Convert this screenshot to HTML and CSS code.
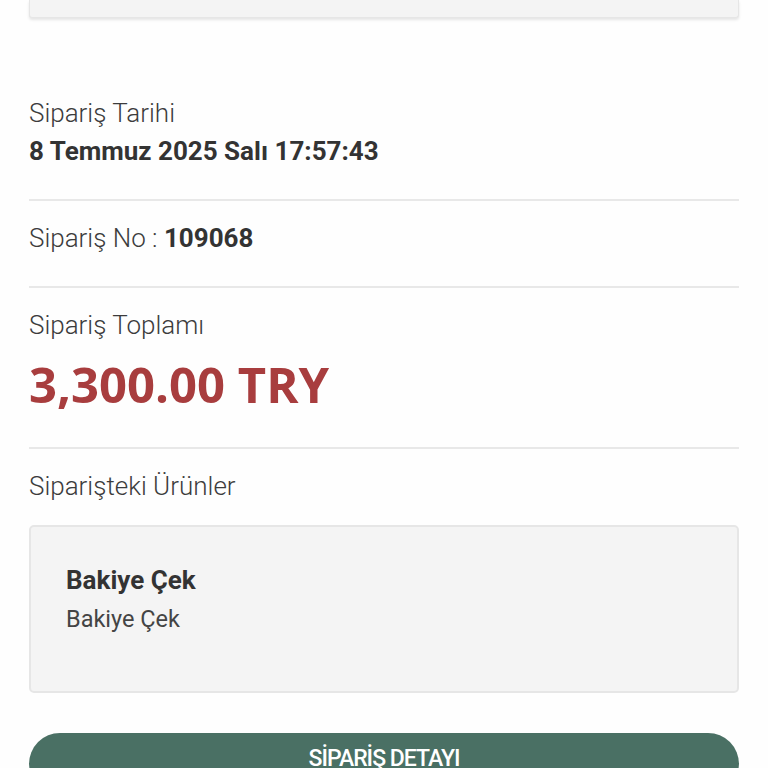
FILE: index.html
```html
<!DOCTYPE html>
<html lang="tr">
<head>
<meta charset="utf-8">
<title>Sipariş</title>
<link rel="stylesheet" href="styles.css">
</head>
<body>
<div class="page">
  <div class="top-card"></div>

  <section class="row first">
    <div class="label">Sipariş Tarihi</div>
    <div class="value">8 Temmuz 2025 Salı 17:57:43</div>
  </section>

  <section class="row">
    <div class="label">Sipariş No : <b class="value-inline">109068</b></div>
  </section>

  <section class="row">
    <div class="label">Sipariş Toplamı</div>
    <div class="price">3,300.00 TRY</div>
  </section>

  <section class="row last">
    <div class="label">Siparişteki Ürünler</div>
    <div class="product-card">
      <div class="product-title">Bakiye Çek</div>
      <div class="product-desc">Bakiye Çek</div>
    </div>
  </section>

  <button class="detail-btn">SİPARİŞ DETAYI</button>
</div>
</body>
</html>
```

FILE: styles.css
```css
html, body {
  margin: 0;
  padding: 0;
  background: #fefefe;
  overflow: hidden;
}
body {
  font-family: Roboto, "Liberation Sans", sans-serif;
  color: #444;
}
.page {
  padding: 0 29px;
  display: flex;
  flex-direction: column;
}
.top-card {
  height: 17px;
  background: #f4f4f4;
  border: 1px solid #e6e6e6;
  border-top: none;
  border-radius: 0 0 3px 3px;
  box-shadow: 0 2px 3px rgba(0,0,0,0.10);
  margin-bottom: 58px;
}
.row {
  padding: 22px 0 33px;
  border-bottom: 2px solid #e8e8e8;
  display: flex;
  flex-direction: column;
  gap: 8px;
}
.row.last {
  border-bottom: none;
  gap: 24px;
  padding-bottom: 0;
}
.label {
  font-size: 26px;
  line-height: 30px;
  font-weight: 300;
  color: #3c3c3c;
}
.value {
  font-size: 26px;
  line-height: 30px;
  font-weight: 700;
  color: #333;
}
.value-inline {
  font-weight: 700;
  color: #333;
}
.price {
  font-family: "Open Sans", Roboto, sans-serif;
  font-size: 49px;
  line-height: 60px;
  font-weight: 700;
  color: #a83d3e;
  margin-top: 6px;
}
.product-card {
  background: #f4f4f4;
  border: 2px solid #e6e6e6;
  border-radius: 5px;
  padding: 38px 35px 57px;
  display: flex;
  flex-direction: column;
  gap: 9px;
}
.product-title {
  font-size: 26px;
  line-height: 30px;
  font-weight: 700;
  color: #333;
}
.product-desc {
  font-size: 23.5px;
  line-height: 30px;
  font-weight: 400;
  color: #444;
}
.detail-btn {
  margin-top: 40px;
  height: 62px;
  border: none;
  border-radius: 31px;
  background: #4a7064;
  color: #fff;
  font-family: Roboto, sans-serif;
  font-size: 23px;
  font-weight: 500;
  letter-spacing: -1px;
  padding: 12px 0 0;
  display: flex;
  justify-content: center;
  align-items: flex-start;
}
```
